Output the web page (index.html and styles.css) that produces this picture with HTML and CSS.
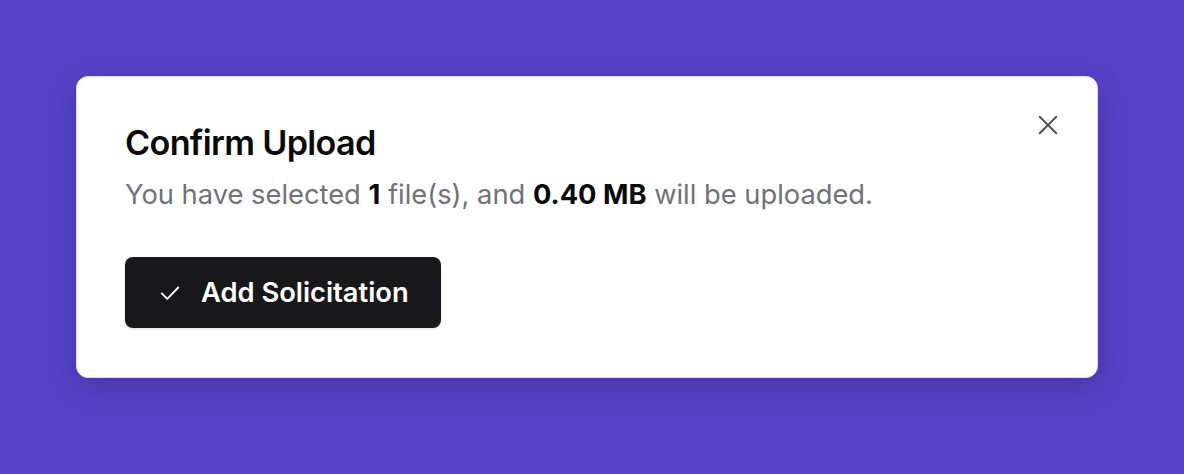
FILE: index.html
```html
<!DOCTYPE html>
<html lang="en">
<head>
  <meta charset="UTF-8">
  <title>Confirm Upload</title>
  <link rel="stylesheet" href="styles.css">
</head>
<body>
  <div class="dialog">
    <button class="close" aria-label="Close">
      <svg width="22" height="22" viewBox="0 0 24 24" fill="none" stroke="currentColor" stroke-width="2" stroke-linecap="round"><path d="M3 3l18 18M21 3L3 21"/></svg>
    </button>
    <h2 class="title">Confirm Upload</h2>
    <p class="desc">You have selected <strong>1</strong> file(s), and <strong>0.40 MB</strong> will be uploaded.</p>
    <button class="primary">
      <svg width="22" height="22" viewBox="0 0 24 24" fill="none" stroke="currentColor" stroke-width="2" stroke-linecap="round" stroke-linejoin="round"><path d="M3 12.5l6 6L21 6"/></svg>
      Add Solicitation
    </button>
  </div>
</body>
</html>
```
FILE: styles.css
```css
body {
  margin: 0;
  background: #5542c6;
  font-family: Inter, "Noto Sans", sans-serif;
  padding: 76px 86px 0 76px;
  height: 474px;
  box-sizing: border-box;
}
.dialog {
  position: relative;
  background: #fff;
  border: 1px solid #dcdce0;
  border-radius: 12px;
  box-shadow: 0 10px 30px rgba(20, 10, 60, 0.2);
  padding: 46px 48px 49px 48px;
  width: 1022px;
  box-sizing: border-box;
}
.title {
  margin: 0;
  font-size: 34.2px;
  font-weight: 600;
  letter-spacing: -0.02em;
  color: #0a0a0b;
  line-height: 40px;
}
.desc {
  margin: 14px 0 0;
  font-size: 27.3px;
  color: #71717a;
  line-height: 36px;
}
.desc strong {
  color: #0a0a0b;
  font-weight: 700;
}
.primary {
  margin-top: 44px;
  display: flex;
  align-items: center;
  gap: 20px;
  height: 71px;
  padding: 0 32px 0 34px;
  background: #18181b;
  color: #fff;
  border: none;
  border-radius: 8px;
  font-family: inherit;
  font-size: 27.3px;
  font-weight: 600;
  box-shadow: 0 1px 3px rgba(0,0,0,0.15);
}
.close {
  position: absolute;
  top: 37px;
  right: 38px;
  background: none;
  border: none;
  padding: 0;
  color: #4a4a50;
  display: flex;
}
```
